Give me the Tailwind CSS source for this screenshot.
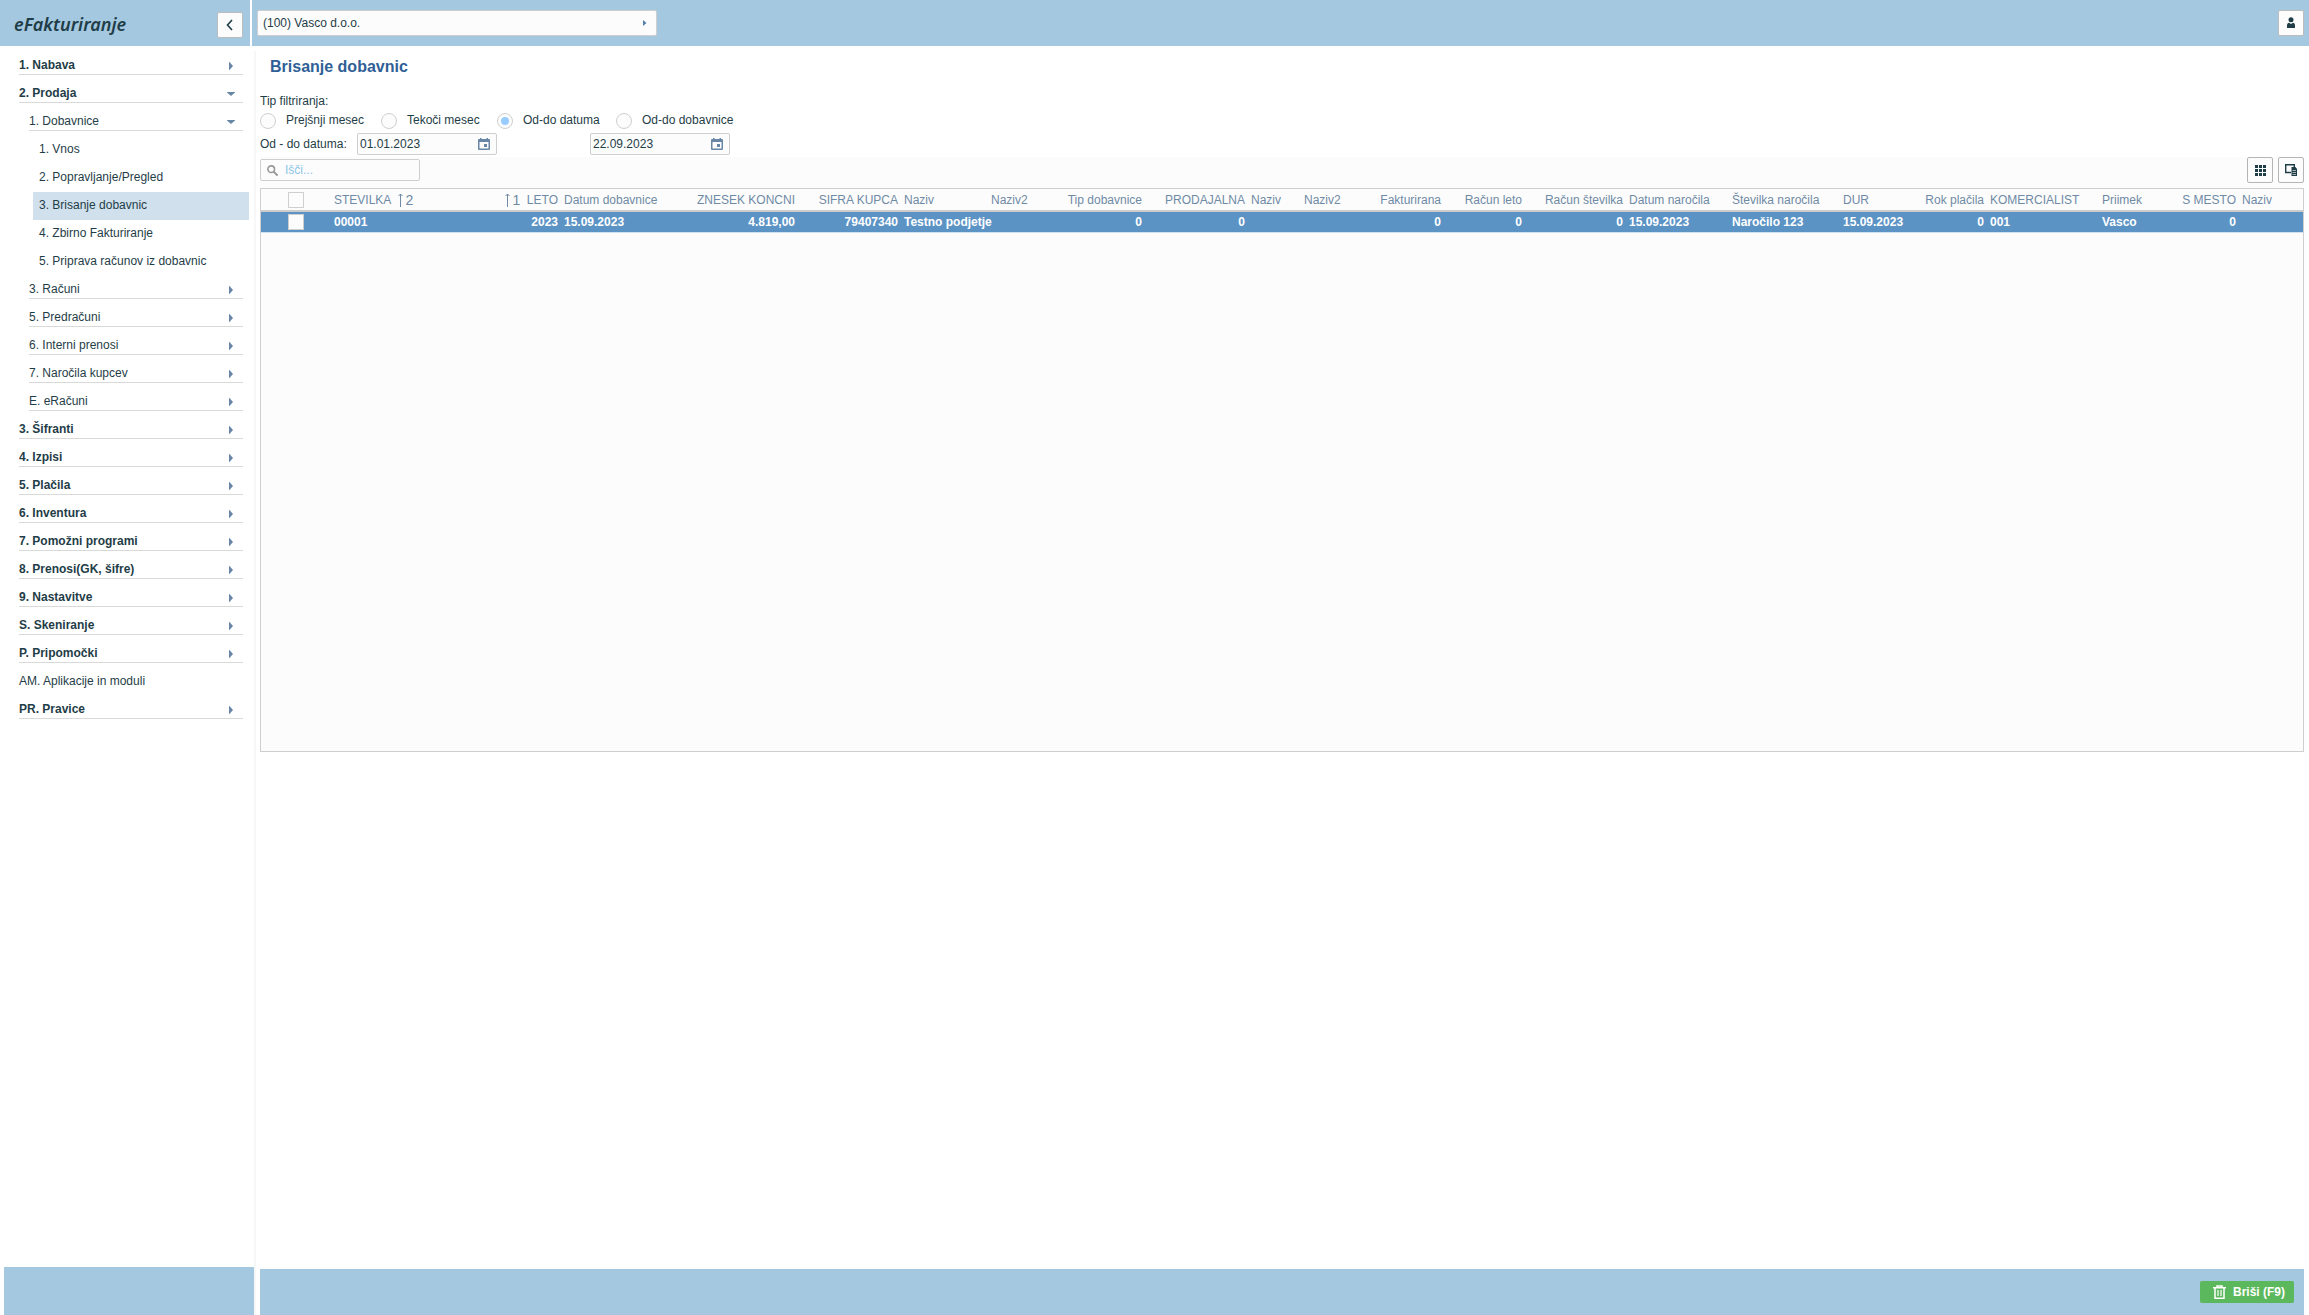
<!DOCTYPE html>
<html lang="sl">
<head>
<meta charset="utf-8">
<title>eFakturiranje</title>
<script src="https://cdn.jsdelivr.net/npm/@tailwindcss/browser@4"></script>
</head>
<body class="flex min-h-screen flex-col bg-white font-['Liberation_Sans',Arial,sans-serif] text-xs text-[#1f3d47]">
<header class="flex h-[46px] bg-[#a4c8e0]">
  <div class="flex w-[252px] shrink-0 items-center justify-between border-r-2 border-white pt-1 pr-[7px] pl-3.5">
    <span class="pb-0.5 font-['Noto_Sans',sans-serif] text-lg leading-6 font-semibold italic">eFakturiranje</span>
    <button aria-label="Skrij meni" class="flex size-[26px] items-center justify-center rounded-xs border border-[#bdbdbd] bg-[#fcfcfc]">
      <svg class="size-3" viewBox="0 0 12 12" fill="none" stroke="currentColor" stroke-width="1.6"><path d="M8 1 3.500 6 8 11"/></svg>
    </button>
  </div>
  <div class="flex grow items-start justify-between pt-2.5 pr-[5px] pl-[5px]">
    <button class="flex h-[26px] w-[400px] items-center justify-between rounded-xs border border-[#cfcfcf] bg-[#fcfcfc] px-[5px]">
      <span>(100) Vasco d.o.o.</span>
      <svg class="mr-1 h-[6px] w-[4px] text-[#5580a8]" viewBox="0 0 4 6" fill="currentColor"><path d="M0 0v6L3.500 3z"/></svg>
    </button>
    <button aria-label="Uporabnik" class="flex size-[26px] items-center justify-center rounded-xs border border-[#bdbdbd] bg-[#fcfcfc]">
      <svg class="h-[12px] w-[8px]" viewBox="0 0 8 12" fill="currentColor"><circle cx="4" cy="2.700" r="2.500"/><path d="M0 11V8.500C0 6.800 1 6 2 5.800L4 7l2-1.200c1 .2 2 1 2 2.700V11z"/></svg>
    </button>
  </div>
</header>
<div class="flex grow pt-[5px]">
  <aside class="flex w-[256px] shrink-0 flex-col border-r-2 border-[#f7f7f7]">
    <nav id="menu" class="grow pt-px pr-[5px]"></nav>
    <div class="ml-1 h-12 bg-[#a4c8e0]"></div>
  </aside>
  <main class="flex min-w-0 grow flex-col pr-[5px] pl-1">
    <h1 class="pt-[5px] pl-2.5 text-base leading-[22px] font-bold text-[#2f5f96]">Brisanje dobavnic</h1>
    <fieldset class="mt-3.5">
      <legend class="h-[18px] pt-px leading-4">Tip filtriranja:</legend>
      <div class="flex h-[20px] items-center">
        <label class="flex w-[121px] items-center gap-2.5"><input type="radio" name="tip" class="mt-0.5 size-4 appearance-none rounded-full border border-[#cfcfcf] bg-[#fcfcfc]">Prejšnji mesec</label>
        <label class="flex w-[116px] items-center gap-2.5"><input type="radio" name="tip" class="mt-0.5 size-4 appearance-none rounded-full border border-[#cfcfcf] bg-[#fcfcfc]">Tekoči mesec</label>
        <label class="flex w-[119px] items-center gap-2.5"><input type="radio" name="tip" checked class="mt-0.5 flex size-4 appearance-none items-center justify-center rounded-full border border-[#cfcfcf] bg-[#fcfcfc] before:size-2 before:rounded-full before:bg-[#99ccff]">Od-do datuma</label>
        <label class="flex items-center gap-2.5"><input type="radio" name="tip" class="mt-0.5 size-4 appearance-none rounded-full border border-[#cfcfcf] bg-[#fcfcfc]">Od-do dobavnice</label>
      </div>
    </fieldset>
    <div class="mt-[3px] flex h-[22px] items-center">
      <label for="od" class="w-[97px]">Od - do datuma:</label>
      <div class="flex h-[22px] w-[140px] items-center justify-between rounded-xs border border-[#cfcfcf] bg-[#fcfcfc] pr-1.5 pl-0.5">
        <input id="od" value="01.01.2023" class="w-24 bg-transparent outline-none">
        <svg class="h-[12px] w-[12px] text-[#6886a5]" viewBox="0 0 12 12" fill="currentColor"><path fill-rule="evenodd" d="M2 0h1.500v1h5V0H10v1h1a1 1 0 0 1 1 1v9a1 1 0 0 1-1 1H1a1 1 0 0 1-1-1V2a1 1 0 0 1 1-1h1zM1.500 4v6.500h9V4zM6 6h3v3H6z"/></svg>
      </div>
      <div class="ml-[93px] flex h-[22px] w-[140px] items-center justify-between rounded-xs border border-[#cfcfcf] bg-[#fcfcfc] pr-1.5 pl-0.5">
        <input aria-label="Do datuma" value="22.09.2023" class="w-24 bg-transparent outline-none">
        <svg class="h-[12px] w-[12px] text-[#6886a5]" viewBox="0 0 12 12" fill="currentColor"><path fill-rule="evenodd" d="M2 0h1.500v1h5V0H10v1h1a1 1 0 0 1 1 1v9a1 1 0 0 1-1 1H1a1 1 0 0 1-1-1V2a1 1 0 0 1 1-1h1zM1.500 4v6.500h9V4zM6 6h3v3H6z"/></svg>
      </div>
    </div>
    <section class="mt-0.5 bg-[#fcfcfc]">
      <div class="flex h-[31px] items-start justify-between">
        <div class="mt-0.5 flex h-[22px] w-40 items-center gap-[7px] rounded-xs border border-[#cfcfcf] bg-[#fcfcfc] pl-1.5">
          <svg class="size-[11px] text-[#999]" viewBox="0 0 11 11" fill="none" stroke="currentColor"><circle cx="4.200" cy="4.200" r="3.300" stroke-width="1.600"/><path d="m6.600 6.600 4 4" stroke-width="2"/></svg>
          <input aria-label="Išči" placeholder="Išči..." class="w-28 bg-transparent outline-none placeholder:text-[#8cc6e6]">
        </div>
        <div class="flex gap-[5px]">
          <button aria-label="Stolpci" class="flex size-[26px] items-center justify-center rounded-xs border border-[#b5b5b5] bg-[#fcfcfc]">
            <svg class="h-[11px] w-[11px]" viewBox="0 0 11 11" fill="currentColor"><path d="M0 0h3v3H0zM4 0h3v3H4zM8 0h3v3H8zM0 4h3v3H0zM4 4h3v3H4zM8 4h3v3H8zM0 8h3v3H0zM4 8h3v3H4zM8 8h3v3H8z"/></svg>
          </button>
          <button aria-label="Izvoz" class="flex size-[26px] items-center justify-center rounded-xs border border-[#b5b5b5] bg-[#fcfcfc]">
            <svg class="h-[12px] w-[12px]" viewBox="0 0 12 12"><path d="M6 8.500H.700V.700h8.600V3" fill="none" stroke="currentColor" stroke-width="1.400"/><path d="M6.500 3h4l1.500 2v7H6.500z" fill="currentColor"/><path d="M7.500 6.500h3.500M7.500 8.500h3.500M7.500 10.500h3.500" stroke="#fcfcfc" stroke-width=".6"/></svg>
          </button>
        </div>
      </div>
      <div class="min-h-[564px] overflow-hidden border border-[#cfcfcf]">
        <table class="w-full table-fixed border-collapse whitespace-nowrap">
          <colgroup id="cols"></colgroup>
          <thead><tr id="head" class="h-[22px] border-b-2 border-[#cccccc] text-[#6f8aa5]"></tr></thead>
          <tbody><tr id="row" class="h-[21px] border-b border-[#d0e2f0] bg-[#5c93c5] font-bold text-white"></tr></tbody>
        </table>
      </div>
    </section>
    <footer class="mt-auto flex h-[46px] items-center justify-end bg-[#a4c8e0] pr-2.5">
      <button class="flex h-[22px] w-[94px] items-center gap-[7px] rounded-xs bg-[#5cb85c] pl-[13px] font-bold whitespace-nowrap text-white">
        <svg class="h-[14px] w-[13px] shrink-0" viewBox="0 0 13 14" fill="none" stroke="currentColor"><path d="M0 2.700h13M4 2.500V1h5v1.500M2 3v10.200h9V3" stroke-width="1.500"/><path d="M5 5v6M8 5v6" stroke-width="1.200"/></svg>
        Briši (F9)
      </button>
    </footer>
  </main>
</div>
<script>
// [indent level, label, state] - state: r = collapsed, d = expanded, '' = leaf, 's' = selected leaf
const items = [
  [0,'1. Nabava','r'],[0,'2. Prodaja','d'],[1,'1. Dobavnice','d'],[2,'1. Vnos',''],[2,'2. Popravljanje/Pregled',''],
  [2,'3. Brisanje dobavnic','s'],[2,'4. Zbirno Fakturiranje',''],[2,'5. Priprava računov iz dobavnic',''],
  [1,'3. Računi','r'],[1,'5. Predračuni','r'],[1,'6. Interni prenosi','r'],[1,'7. Naročila kupcev','r'],[1,'E. eRačuni','r'],
  [0,'3. Šifranti','r'],[0,'4. Izpisi','r'],[0,'5. Plačila','r'],[0,'6. Inventura','r'],[0,'7. Pomožni programi','r'],
  [0,'8. Prenosi(GK, šifre)','r'],[0,'9. Nastavitve','r'],[0,'S. Skeniranje','r'],[0,'P. Pripomočki','r'],
  [0,'AM. Aplikacije in moduli',''],[0,'PR. Pravice','r']];
const arrow = {
  r: '<svg class="mt-0.5 mr-0.5 h-[8px] w-[4px] text-[#6886a5]" viewBox="0 0 4 8" fill="currentColor"><path d="M0 0h.5L4 4 .5 8H0z"/></svg>',
  d: '<svg class="mt-px h-[4px] w-[8px] text-[#6886a5]" viewBox="0 0 8 4" fill="currentColor"><path d="M0 0h8v.5L4 4 0 .5z"/></svg>'};
const margin = ['ml-[19px]', 'ml-[29px]', 'ml-[33px]'];
document.getElementById('menu').innerHTML = items.map(([lv, text, st]) =>
  arrow[st]
    ? `<a href="#" class="${margin[lv]} ${lv ? '' : 'font-bold'} mr-[6px] mb-[5px] flex h-[23px] items-center justify-between border-b border-[#d9d9d9] pt-1 pr-2"><span>${text}</span>${arrow[st]}</a>`
    : `<a href="#" class="${margin[lv]} ${lv ? 'pl-1.5' : ''} ${st ? 'bg-[#d0e0ed]' : ''} flex h-[28px] items-center pb-[3px]">${text}</a>`).join('');

// [width, header, value, right aligned]
const up = n => `<span class="inline-flex items-center gap-px align-top"><svg class="h-[14px] w-[7px]" viewBox="0 0 7 14" fill="none" stroke="currentColor"><path d="M3.500 14V1M1.500 3l2-2 2 2"/></svg><span class="text-sm leading-4">${n}</span></span>`;
const box = '<input type="checkbox" aria-label="Izberi" class="block size-4 appearance-none border border-[#cfcfcf] bg-[#fcfcfc] ml-6">';
const columns = [[70,box,box,0],[130,'STEVILKA &nbsp;'+up(2),'00001',0],[100,up(1)+'&nbsp; LETO','2023',1],[111,'Datum dobavnice','15.09.2023',0],
  [126,'ZNESEK KONCNI','4.819,00',1],[103,'SIFRA KUPCA','79407340',1],[87,'Naziv','Testno podjetje',0],[53,'Naziv2','',0],
  [104,'Tip dobavnice','0',1],[103,'PRODAJALNA','0',1],[53,'Naziv','',0],[53,'Naziv2','',0],[90,'Fakturirana','0',1],
  [81,'Račun leto','0',1],[101,'Račun številka','0',1],[103,'Datum naročila','15.09.2023',0],[111,'Številka naročila','Naročilo 123',0],
  [67,'DUR','15.09.2023',0],[80,'Rok plačila','0',1],[112,'KOMERCIALIST','001',0],[68,'Priimek','Vasco',0],[72,'S MESTO','0',1],[0,'Naziv','',0]];
document.getElementById('cols').innerHTML = columns.map(c => c[0] ? `<col style="width:${c[0]}px">` : '<col>').join('');
const cells = (tag, i) => columns.map(c => `<${tag} class="px-[3px] py-0 ${tag === 'th' ? 'font-normal' : ''} ${c[3] ? 'text-right' : 'text-left'}">${c[i]}</${tag}>`).join('');
document.getElementById('head').innerHTML = cells('th', 1);
document.getElementById('row').innerHTML = cells('td', 2);
</script>
</body>
</html>
